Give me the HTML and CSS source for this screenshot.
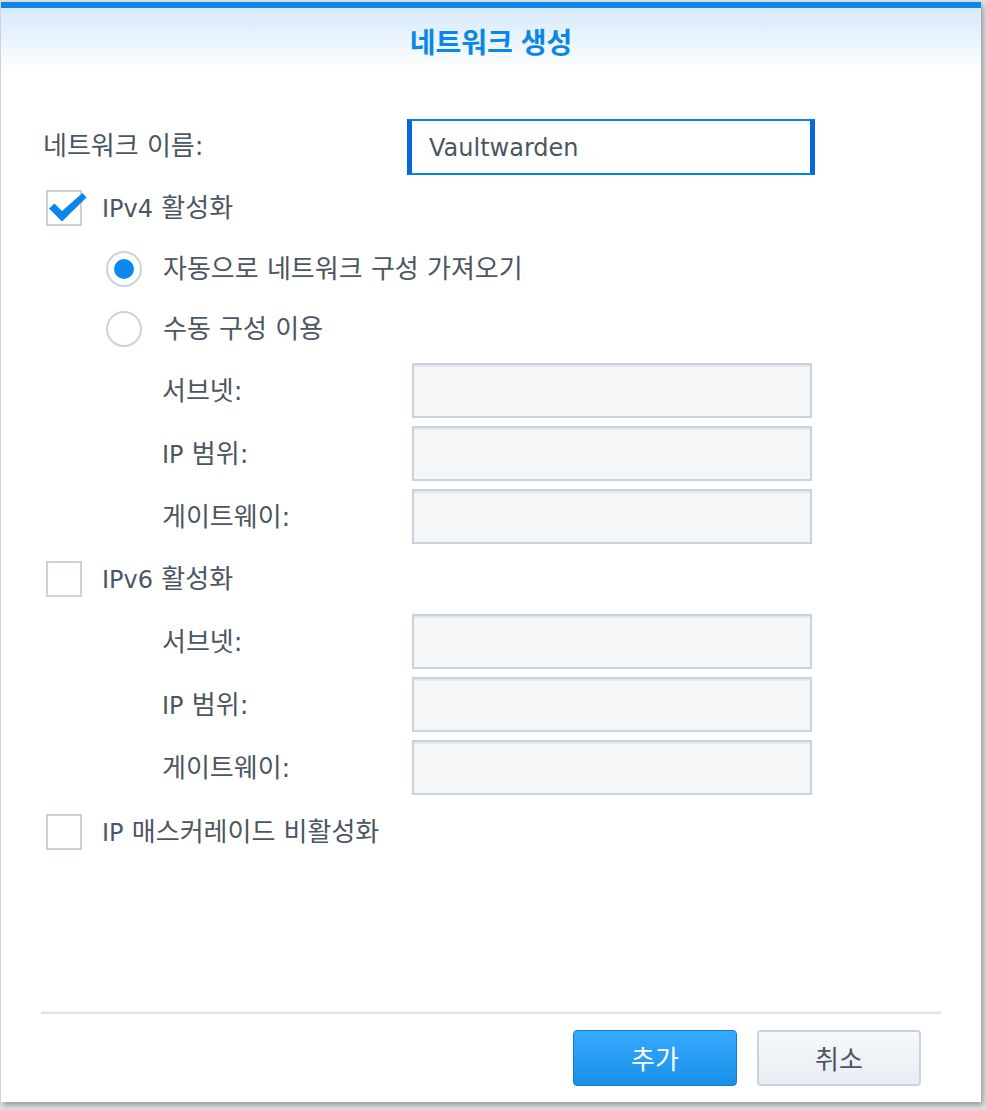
FILE: index.html
```html
<!DOCTYPE html>
<html lang="ko">
<head>
<meta charset="utf-8">
<link rel="stylesheet" href="styles.css">
</head>
<body>
<div class="dialog">
  <div class="topbar"></div>
  <div class="header"><h1 class="title">네트워크 생성</h1></div>
  <div class="content">
    <div class="row row-name">
      <label class="name-label">네트워크 이름:</label>
      <div class="input input-focus">Vaultwarden</div>
    </div>
    <div class="row row-check">
      <span class="checkbox checked">
        <svg class="checkmark" viewBox="0 0 36 36" width="36" height="36"><path d="M3 18.5 L8.5 13.5 L16 21 L36.5 3 L40.5 7.5 L16 31.5 Z" fill="#0a86e8"/></svg>
      </span>
      <span class="check-label"><span class="lat">IPv4</span> 활성화</span>
    </div>
    <div class="row row-radio">
      <span class="radio selected"><span class="dot"></span></span>
      <span class="radio-label">자동으로 네트워크 구성 가져오기</span>
    </div>
    <div class="row row-radio">
      <span class="radio"></span>
      <span class="radio-label">수동 구성 이용</span>
    </div>
    <div class="row row-field">
      <span class="field-label">서브넷:</span>
      <div class="input input-disabled"></div>
    </div>
    <div class="row row-field">
      <span class="field-label"><span class="lat">IP</span> 범위:</span>
      <div class="input input-disabled"></div>
    </div>
    <div class="row row-field">
      <span class="field-label">게이트웨이:</span>
      <div class="input input-disabled"></div>
    </div>
    <div class="row row-check">
      <span class="checkbox"></span>
      <span class="check-label"><span class="lat">IPv6</span> 활성화</span>
    </div>
    <div class="row row-field">
      <span class="field-label">서브넷:</span>
      <div class="input input-disabled"></div>
    </div>
    <div class="row row-field">
      <span class="field-label"><span class="lat">IP</span> 범위:</span>
      <div class="input input-disabled"></div>
    </div>
    <div class="row row-field">
      <span class="field-label">게이트웨이:</span>
      <div class="input input-disabled"></div>
    </div>
    <div class="row row-check row-last">
      <span class="checkbox"></span>
      <span class="check-label"><span class="lat">IP</span> 매스커레이드 비활성화</span>
    </div>
  </div>
  <div class="footer">
    <div class="separator"></div>
    <div class="buttons">
      <button class="btn btn-primary">추가</button>
      <button class="btn btn-default">취소</button>
    </div>
  </div>
</div>
</body>
</html>
```
FILE: styles.css
```css
html, body {
  margin: 0;
  padding: 0;
}
body {
  width: 986px;
  height: 1110px;
  overflow: hidden;
  background: #e2e2e2;
  font-family: "DejaVu Sans", "Noto Sans CJK KR", sans-serif;
  color: #4b5662;
  padding-top: 2px;
  padding-left: 1px;
  box-sizing: border-box;
}
.dialog {
  width: 980px;
  height: 1100px;
  background: #ffffff;
  display: flex;
  flex-direction: column;
  box-shadow: 2px 3px 6px rgba(0, 0, 0, 0.35);
}
.topbar {
  height: 6px;
  background: #0a89e8;
  flex: none;
}
.header {
  height: 64px;
  flex: none;
  background: linear-gradient(#d6e9fa 0%, #e8f3fd 45%, #ffffff 100%);
  display: flex;
  align-items: center;
  justify-content: center;
}
.title {
  margin: 0;
  font-family: "Noto Sans CJK KR", sans-serif;
  font-size: 28px;
  font-weight: 700;
  color: #0b87e3;
  line-height: 1;
  position: relative;
  top: 1px;
}
.content {
  flex: 1;
  padding: 43px 0 0 42px;
  display: flex;
  flex-direction: column;
}
.row {
  display: flex;
  align-items: center;
  font-size: 26px;
  line-height: 1;
  flex: none;
}
.lat {
  font-size: 24px;
}
.row-name {
  height: 62px;
}
.name-label {
  width: 364px;
  flex: none;
}
.row-check {
  height: 62px;
}
.row-last {
  height: 66px;
}
.row-radio {
  height: 60px;
}
.row-field {
  height: 63px;
}
.checkbox {
  position: relative;
  width: 36px;
  height: 36px;
  box-sizing: border-box;
  border: 2px solid #c9d3de;
  background: #fff;
  margin-left: 3px;
  margin-right: 20px;
  flex: none;
}
.checkmark {
  position: absolute;
  left: -2px;
  top: -2px;
  overflow: visible;
}
.radio {
  width: 36px;
  height: 36px;
  box-sizing: border-box;
  border: 2px solid #c9d3de;
  border-radius: 50%;
  background: #fff;
  margin-left: 63px;
  margin-right: 21px;
  display: flex;
  align-items: center;
  justify-content: center;
  flex: none;
}
.dot {
  width: 20px;
  height: 20px;
  border-radius: 50%;
  background: #0a88ee;
}
.field-label {
  width: 250px;
  margin-left: 119px;
  flex: none;
}
.input {
  box-sizing: border-box;
  flex: none;
}
.input-focus {
  width: 408px;
  height: 56px;
  border: 2px solid #0a84e2;
  border-left-width: 5px;
  border-right-width: 5px;
  border-left-color: #0667dc;
  border-right-color: #0667dc;
  padding: 3px 0 0 17px;
  display: flex;
  align-items: center;
  font-family: "DejaVu Sans", sans-serif;
  font-size: 24px;
  color: #4b5662;
  margin-top: 1px;
}
.input-disabled {
  width: 400px;
  height: 55px;
  border: 2px solid #c9d3de;
  background: #f5f6f8;
  box-shadow: inset 0 2px 0 #e5e9ee;
  margin-top: -1px;
}
.footer {
  flex: none;
  padding: 0 40px;
}
.separator {
  height: 3px;
  background: linear-gradient(#f4f4f4, #dcdcdc);
}
.buttons {
  display: flex;
  justify-content: flex-end;
  gap: 20px;
  padding: 16px 20px 16px 0;
}
.btn {
  width: 164px;
  height: 56px;
  border-radius: 4px;
  font-family: "Noto Sans CJK KR", sans-serif;
  font-size: 26px;
  line-height: 1;
  padding: 0;
  box-sizing: border-box;
  cursor: pointer;
}
.btn-primary {
  color: #ffffff;
  border: 1px solid #1579d0;
  background: linear-gradient(#35aaff, #1a8fe8);
}
.btn-default {
  color: #4b5662;
  border: 2px solid #c9d3de;
  background: linear-gradient(#f6f9fc, #e8edf2);
}
```
